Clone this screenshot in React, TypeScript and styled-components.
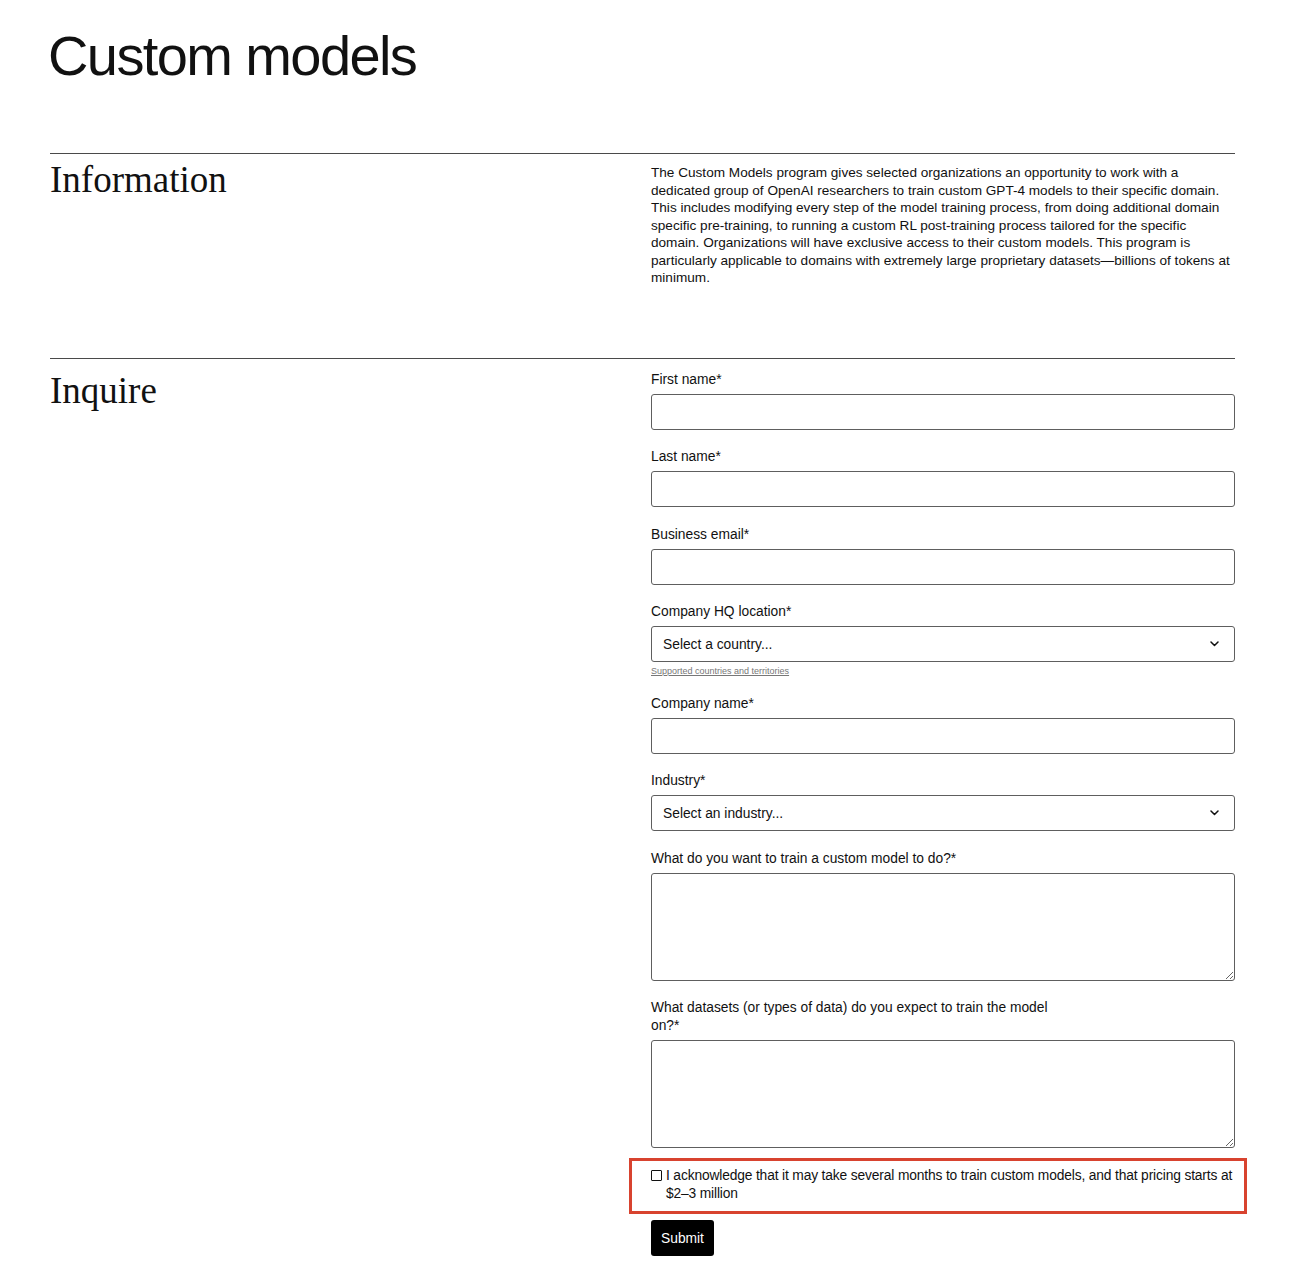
import React from "react";
import styled, { createGlobalStyle } from "styled-components";

const textColor = "#111";
const borderColor = "#5e5e5e";

const GlobalStyle = createGlobalStyle`
	body {
		margin: 0;
		background: #fff;
		color: ${textColor};
		font-family: "Liberation Sans", Arial, sans-serif;
	}
	* {
		box-sizing: border-box;
	}
`;

const fields = [
	{ label: "First name*", kind: "input" },
	{ label: "Last name*", kind: "input" },
	{ label: "Business email*", kind: "input" },
	{ label: "Company HQ location*", kind: "select", placeholder: "Select a country...", helper: "Supported countries and territories" },
	{ label: "Company name*", kind: "input" },
	{ label: "Industry*", kind: "select", placeholder: "Select an industry..." },
	{ label: "What do you want to train a custom model to do?*", kind: "textarea" },
	{ label: "What datasets (or types of data) do you expect to train the model on?*", kind: "textarea" },
];

const Chevron = () => (
	<svg width="9" height="6" viewBox="0 0 9 6" fill="none">
		<path d="M1 1l3.5 3.5L8 1" stroke="#111" strokeWidth="1.5" strokeLinecap="round" strokeLinejoin="round" />
	</svg>
);

export default function App() {
	return (
		<>
			<GlobalStyle />
			<Page>
				<Title>Custom models</Title>

				<Section $bottom={71}>
					<SectionHeading>Information</SectionHeading>
					<Paragraph>
						The Custom Models program gives selected organizations an opportunity to work with a dedicated group
						of OpenAI researchers to train custom GPT-4 models to their specific domain. This includes modifying
						every step of the model training process, from doing additional domain specific pre-training, to
						running a custom RL post-training process tailored for the specific domain. Organizations will have
						exclusive access to their custom models. This program is particularly applicable to domains with
						extremely large proprietary datasets—billions of tokens at minimum.
					</Paragraph>
				</Section>

				<Section $top={12} $bottom={30}>
					<SectionHeading $offset={4}>Inquire</SectionHeading>
					<Form onSubmit={(e) => e.preventDefault()}>
						{fields.map((f) => (
							<Field key={f.label}>
								<Label>{f.label}</Label>
								{f.kind === "input" && <TextInput type="text" />}
								{f.kind === "select" && (
									<SelectWrap>
										<SelectBox defaultValue="">
											<option value="">{f.placeholder}</option>
										</SelectBox>
										<ChevronSlot>
											<Chevron />
										</ChevronSlot>
									</SelectWrap>
								)}
								{f.kind === "textarea" && <TextArea />}
								{f.helper && <Helper href="#">{f.helper}</Helper>}
							</Field>
						))}

						<Ack>
							<Highlight />
							<Checkbox type="checkbox" />
							<AckText>
								I acknowledge that it may take several months to train custom models, and that pricing starts at
								$2–3 million
							</AckText>
						</Ack>

						<SubmitButton type="submit">Submit</SubmitButton>
					</Form>
				</Section>
			</Page>
		</>
	);
}

const Page = styled.main`
	padding: 28px 57px 40px 50px;
`;

const Title = styled.h1`
	margin: 0 0 69px -2px;
	font-size: 56px;
	line-height: 56px;
	font-weight: 400;
	letter-spacing: -1.6px;
`;

const Section = styled.section<{ $top?: number; $bottom?: number }>`
	display: grid;
	grid-template-columns: 601px 1fr;
	border-top: 1px solid #4a4a4a;
	padding-top: ${(p) => p.$top ?? 10}px;
	padding-bottom: ${(p) => p.$bottom ?? 0}px;
`;

const SectionHeading = styled.h2<{ $offset?: number }>`
	margin: ${(p) => p.$offset ?? 0}px 0 0;
	font-family: "Liberation Serif", "Times New Roman", serif;
	font-size: 37px;
	line-height: 32px;
	font-weight: 400;
	letter-spacing: 0;
`;

const Paragraph = styled.p`
	margin: 0;
	font-size: 13.6px;
	line-height: 17.5px;
`;

const Form = styled.form`
	display: flex;
	flex-direction: column;
	align-items: stretch;
`;

const Field = styled.div`
	display: flex;
	flex-direction: column;
	margin-bottom: 18.5px;
`;

const Label = styled.label`
	max-width: 400px;
	font-size: 13.8px;
	line-height: 18px;
	margin-bottom: 5px;
`;

const boxBase = `
	width: 100%;
	border: 1px solid ${borderColor};
	border-radius: 3px;
	background: #fff;
	font-family: "Liberation Sans", Arial, sans-serif;
	font-size: 13.8px;
	color: ${textColor};
	outline: none;
`;

const TextInput = styled.input`
	${boxBase}
	height: 36px;
	padding: 0 11px;
`;

const SelectWrap = styled.div`
	position: relative;
`;

const SelectBox = styled.select`
	${boxBase}
	height: 36px;
	padding: 0 11px;
	appearance: none;
	-webkit-appearance: none;
`;

const ChevronSlot = styled.span`
	position: absolute;
	right: 16px;
	top: 15px;
	display: flex;
	pointer-events: none;
`;

const TextArea = styled.textarea`
	${boxBase}
	display: block;
	height: 108px;
	padding: 8px 11px;
	resize: vertical;
`;

const Helper = styled.a`
	margin-top: 4px;
	font-size: 9px;
	line-height: 10px;
	color: #777;
	text-decoration: underline;
	text-underline-offset: 1px;
`;

const Ack = styled.div`
	position: relative;
	display: flex;
	align-items: flex-start;
	gap: 4px;
	margin-top: -8.5px;
	padding-top: 9px;
`;

const Highlight = styled.span`
	position: absolute;
	top: 0;
	left: -22px;
	right: -12px;
	bottom: -12px;
	border: 3px solid #d8432f;
	pointer-events: none;
`;

const Checkbox = styled.input`
	appearance: none;
	-webkit-appearance: none;
	flex: none;
	width: 11px;
	height: 11px;
	margin: 3px 0 0;
	border: 1.5px solid #111;
	border-radius: 1px;
	background: #fff;
`;

const AckText = styled.span`
	font-size: 13.8px;
	line-height: 17.5px;
	letter-spacing: -0.15px;
`;

const SubmitButton = styled.button`
	align-self: flex-start;
	margin-top: 18px;
	height: 36px;
	padding: 0 10px;
	border: none;
	border-radius: 3px;
	background: #000;
	color: #fff;
	font-family: "Liberation Sans", Arial, sans-serif;
	font-size: 13.8px;
	cursor: pointer;
`;
